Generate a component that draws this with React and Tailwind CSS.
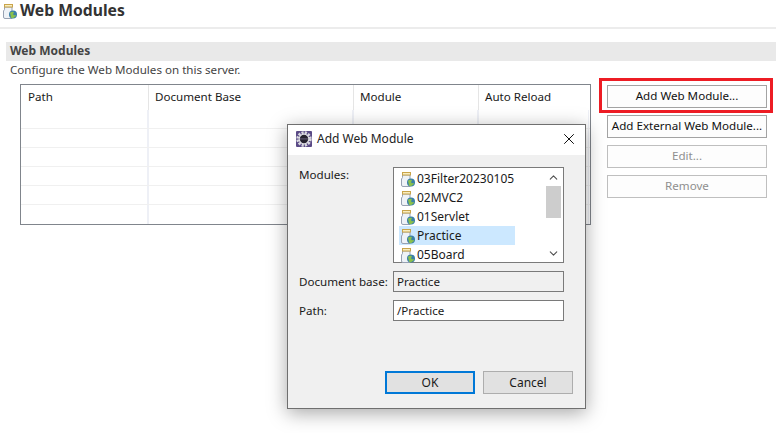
import React from 'react';
import { X, ChevronUp, ChevronDown } from 'lucide-react';

const modules = ['03Filter20230105', '02MVC2', '01Servlet', 'Practice', '05Board'];
const columns = ['Path', 'Document Base', 'Module', 'Auto Reload'];

function ModuleIcon() {
  return (
    <svg width="16" height="16" viewBox="0 0 16 16" className="shrink-0">
      <path d="M2.500 4v2.500l-1 1.500v6a1.500 1.500 0 0 0 1.500 1.500h7v-11.500z" fill="#eef2f7" stroke="#97a1b2" />
      <rect x="2.500" y="1.500" width="8" height="2.500" fill="#f8edc0" stroke="#c9a44a" />
      <circle cx="11" cy="11.500" r="4" fill="#3a7fa8" />
      <path d="M8 9.800c1.400-1.300 3-1.500 3.700-.7s-.9 1.400-.5 2.400 1.600 1.100 3 .2l-.7 1.700-2.600 1.800-1.800-.5z" fill="#8ac04c" />
    </svg>
  );
}

function DialogIcon() {
  return (
    <svg width="16" height="16" viewBox="0 0 16 16" className="shrink-0">
      <rect width="16" height="16" rx="1" fill="#5a4a86" />
      <circle cx="8" cy="8" r="6.400" fill="none" stroke="#d9d9df" strokeWidth="2.600" strokeDasharray="2.200 1.150" />
      <circle cx="8" cy="8" r="5.400" fill="#e3e3e8" />
      <circle cx="8" cy="8" r="4.200" fill="#26232f" />
      <path d="M3.900 7.200h8.200a4.200 4.200 0 0 1 .1 1.200h-8.400a4.200 4.200 0 0 1 .1-1.200z" fill="#5c566f" />
    </svg>
  );
}

function SideButton({ children, disabled }) {
  return (
    <button className={`h-[23px] w-[160px] border pb-px text-[11.6px] leading-none ${disabled ? 'border-[#bfbfbf] bg-[#fdfdfd] text-[#8f8f8f]' : 'border-[#a3a3a3] bg-[#fdfdfd] text-[#111]'}`}>
      {children}
    </button>
  );
}

export default function App() {
  return (
    <div className="relative h-[433px] w-[776px] overflow-hidden bg-white font-['Noto_Sans',sans-serif] text-[11.6px] text-[#1a1a1a]">
      {/* Page header */}
      <div className="flex h-[29px] items-center gap-[2px] border-b-2 border-[#ececec] pb-1.5 pl-[2px]">
        <ModuleIcon />
        <h1 className="text-[15.7px] font-bold leading-none text-[#333]">Web Modules</h1>
      </div>

      {/* Section */}
      <div className="mt-[13px] ml-1.5 flex h-[19px] items-center bg-[#e9e9e9] pb-[2px] pl-1">
        <h2 className="text-xs font-bold text-[#444]">Web Modules</h2>
      </div>
      <p className="ml-2.5 h-[23px] pt-px leading-4 text-[#444]">Configure the Web Modules on this server.</p>

      <div className="flex">
        {/* Modules table */}
        <div className="ml-5 mr-4 h-[141px] w-[571px] border border-[#80858c]">
          <div className="grid h-[25px] grid-cols-[128px_205px_125px_1fr] items-center">
            {columns.map((h, i) => (
              <div key={h} className={`h-full pt-[4px] leading-4 ${i === 0 ? 'pl-[7px]' : 'pl-[6px]'} ${i < 3 ? 'border-r border-[#e5e5e5]' : ''}`}>{h}</div>
            ))}
          </div>
          {[0, 1, 2, 3, 4, 5].map((i) => (
            <div key={i} className={`grid h-[19px] grid-cols-[128px_205px_125px_1fr] ${i < 5 ? 'border-b border-[#f0f0f0]' : ''}`}>
              <div className="border-r-2 border-[#eef0f6]" />
              <div className="border-r-2 border-[#eef0f6]" />
              <div className="border-r-2 border-[#eef0f6]" />
              <div className="mr-[1px] border-r border-[#eef0f6]" />
            </div>
          ))}
        </div>

        {/* Side buttons */}
        <div className="flex flex-col gap-[7px] pt-px">
          <SideButton>Add Web Module...</SideButton>
          <SideButton>Add External Web Module...</SideButton>
          <SideButton disabled>Edit...</SideButton>
          <SideButton disabled>Remove</SideButton>
        </div>
      </div>

      {/* Red annotation */}
      <div className="absolute left-[599px] top-[78px] h-[35px] w-[174px] border-[3px] border-[#ed1c24]" />

      {/* Add Web Module dialog */}
      <div className="absolute left-[287px] top-[124px] flex h-[285px] w-[299px] flex-col border border-[#6f6f6f] bg-[#f0f0f0] shadow-[0_4px_18px_rgba(0,0,0,0.35)]">
        <div className="flex h-[30px] items-center bg-white pb-[2px] pl-2 pr-[7px]">
          <DialogIcon />
          <span className="ml-[5px] flex-1 text-xs text-[#222]">Add Web Module</span>
          <X size={18} strokeWidth={1.250} className="text-black" />
        </div>

        <div className="grid grid-cols-[94px_171px] items-start pl-[11px] pt-[12px]">
          <label className="leading-4">Modules:</label>
          <div className="flex h-[96px] border border-[#7a7a7a] bg-white pl-[5px]">
            <ul className="w-[147px] pt-px">
              {modules.map((m) => (
                <li key={m} className={`flex h-[19px] w-[116px] items-center gap-px pl-px ${m === 'Practice' ? 'bg-[#cce8ff]' : ''}`}>
                  <ModuleIcon />
                  <span className="whitespace-nowrap text-xs">{m}</span>
                </li>
              ))}
            </ul>
            <div className="flex w-[15px] flex-col items-center">
              <div className="flex h-[18px] shrink-0 items-center"><ChevronUp size={13} strokeWidth={2} className="text-[#505050]" /></div>
              <div className="h-[32px] w-full shrink-0 bg-[#cdcdcd]" />
              <div className="mt-auto flex h-[17px] shrink-0 items-center"><ChevronDown size={13} strokeWidth={2} className="text-[#505050]" /></div>
            </div>
          </div>

          <label className="mt-[8px] flex h-[21px] items-center">Document base:</label>
          <div className="mt-[8px] flex h-[21px] items-center border border-[#7a7a7a] bg-[#f0f0f0] pl-[3px]">Practice</div>

          <label className="mt-[8px] flex h-[21px] items-center">Path:</label>
          <div className="mt-[8px] flex h-[21px] items-center border border-[#7a7a7a] bg-white pl-[3px]">/Practice</div>
        </div>

        <div className="mt-auto flex justify-end gap-2 pb-[14px] pr-3">
          <button className="h-[23px] w-[90px] border-2 border-[#0078d7] bg-[#e1e1e1] text-xs leading-none">OK</button>
          <button className="h-[23px] w-[90px] border border-[#adadad] bg-[#e1e1e1] text-xs leading-none">Cancel</button>
        </div>
      </div>
    </div>
  );
}
